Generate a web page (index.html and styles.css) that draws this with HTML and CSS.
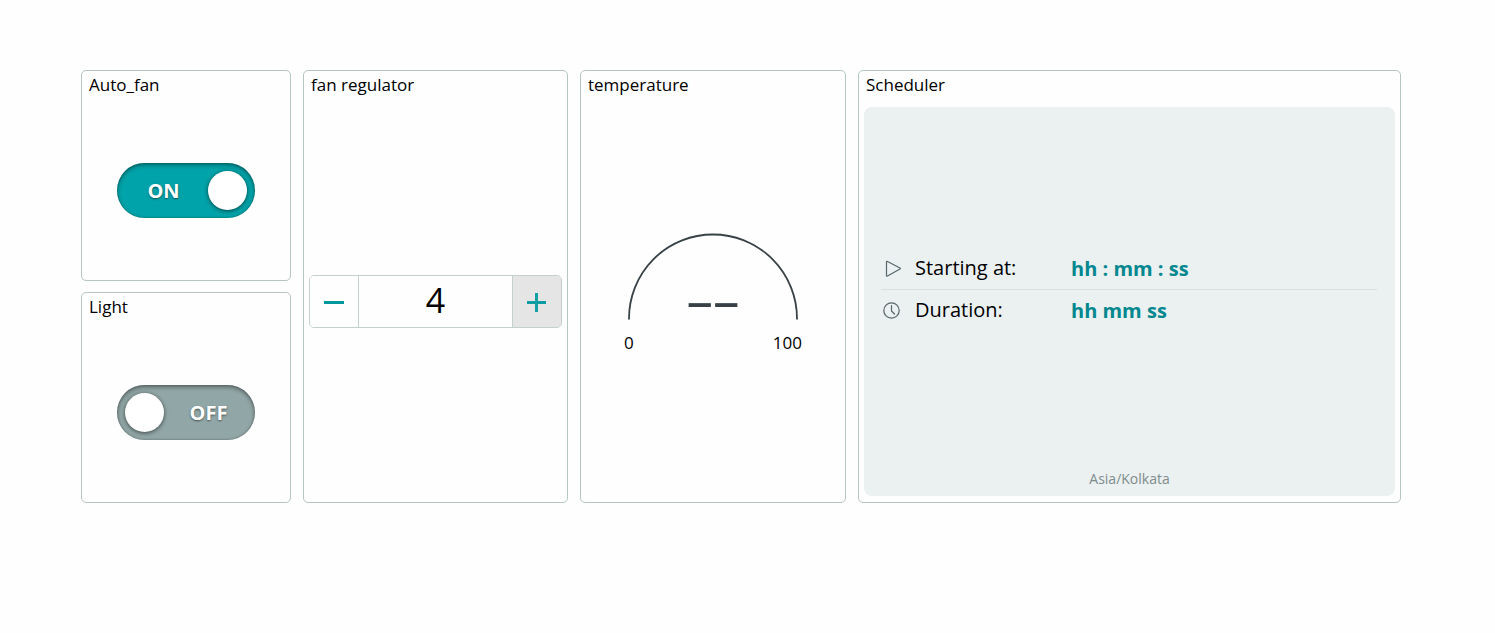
FILE: index.html
```html
<!DOCTYPE html>
<html lang="en">
<head>
<meta charset="utf-8">
<title>Dashboard</title>
<link rel="stylesheet" href="styles.css">
</head>
<body>
<main class="dashboard">
  <div class="stack">
    <section class="card">
      <h2 class="card-title" id="t-fan">Auto_fan</h2>
      <div class="card-body">
        <label class="toggle">
          <input class="toggle-input" type="checkbox" role="switch" aria-labelledby="t-fan" checked>
          <span class="toggle-text toggle-on">ON</span>
          <span class="toggle-knob"></span>
          <span class="toggle-text toggle-off">OFF</span>
        </label>
      </div>
    </section>
    <section class="card">
      <h2 class="card-title" id="t-light">Light</h2>
      <div class="card-body">
        <label class="toggle">
          <input class="toggle-input" type="checkbox" role="switch" aria-labelledby="t-light">
          <span class="toggle-text toggle-on">ON</span>
          <span class="toggle-knob"></span>
          <span class="toggle-text toggle-off">OFF</span>
        </label>
      </div>
    </section>
  </div>

  <section class="card">
    <h2 class="card-title" id="t-reg">fan regulator</h2>
    <div class="card-body">
      <div class="stepper">
        <button class="step" type="button" aria-label="Decrease">
          <svg width="20" height="20" viewBox="0 0 20 20"><path d="M0 10.500H20" stroke="#00979d" stroke-width="3"/></svg>
        </button>
        <input class="step-value" type="text" value="4" aria-labelledby="t-reg">
        <button class="step step-active" type="button" aria-label="Increase">
          <svg width="20" height="20" viewBox="0 0 20 20"><path d="M0 10.500H19M9.500 1V20" stroke="#12a0a5" stroke-width="3"/><path d="M0 10.500H19" stroke="#00979d"/></svg>
        </button>
      </div>
    </div>
  </section>

  <section class="card">
    <h2 class="card-title">temperature</h2>
    <div class="card-body">
      <div class="gauge">
        <svg class="gauge-dial" width="170" height="86" viewBox="0 0 170 86">
          <path d="M1 85.500V84.500A84 84 0 0 1 169 84.500V85.500" fill="none" stroke="#374146" stroke-width="1.800"/>
          <text class="gauge-value" x="85" y="85" text-anchor="middle">––</text>
        </svg>
        <div class="gauge-range"><span>0</span><span>100</span></div>
      </div>
    </div>
  </section>

  <section class="card">
    <h2 class="card-title">Scheduler</h2>
    <div class="card-body">
      <div class="scheduler">
        <div class="schedule-list">
          <div class="schedule-row">
            <svg class="schedule-icon" width="20" height="20" viewBox="0 0 20 20" fill="none" stroke="#57676b" stroke-width="1.200" stroke-linejoin="round"><path d="M5.500 3Q5.500 2 6.500 2.500L19 9Q19.800 9.500 19 10L6.500 17Q5.500 17.500 5.500 16.500Z"/></svg>
            <span class="schedule-name">Starting at:</span>
            <button class="schedule-value" type="button">hh : mm : ss</button>
          </div>
          <div class="schedule-row">
            <svg class="schedule-icon" width="20" height="20" viewBox="0 0 20 20" fill="none" stroke="#57676b" stroke-width="1.200" stroke-linecap="round" stroke-linejoin="round"><circle cx="10.500" cy="9.500" r="7.700"/><path d="M10.500 4.500V10L13.500 13"/></svg>
            <span class="schedule-name">Duration:</span>
            <button class="schedule-value" type="button">hh mm ss</button>
          </div>
        </div>
        <div class="timezone">Asia/Kolkata</div>
      </div>
    </div>
  </section>
</main>
</body>
</html>
```
FILE: styles.css
```css
* { box-sizing: border-box; }

body {
  margin: 0;
  background: #fefefe;
  color: #000;
  font-family: "Open Sans", "Noto Sans", sans-serif;
}

button, input { font: inherit; margin: 0; }

.dashboard {
  display: grid;
  grid-template-columns: 210fr 265fr 266fr 543fr;
  min-height: 573px;
  gap: 12px;
  padding: 70px 94px 70px 81px;
}

.stack {
  display: grid;
  grid-template-rows: 1fr 1fr;
  gap: 11px;
}

.card {
  display: flex;
  flex-direction: column;
  min-width: 0;
  border: 1px solid #b5c5c3;
  border-radius: 5px;
  background: #fefefe;
}

.card-title {
  margin: 0;
  padding: 2px 7px 4px;
  font-size: 17px;
  line-height: 24px;
  font-weight: 400;
}

.card-body {
  flex: 1;
  display: flex;
  align-items: center;
  justify-content: center;
  padding: 6px 5px;
}

/* Toggle */
.toggle {
  display: flex;
  align-items: center;
  width: 138px;
  height: 55px;
  padding: 0 8px;
  border-radius: 28px;
  background: #91a6a6;
  box-shadow: inset 0 2px 4px rgba(0, 0, 0, 0.4), inset 0 0 2px rgba(0, 0, 0, 0.3);
  cursor: pointer;
}

.toggle:has(:checked) { background: #00a3a9; }

.toggle-input {
  position: absolute;
  opacity: 0;
  pointer-events: none;
}

.toggle-text {
  flex: 1;
  color: #fff;
  font-size: 20px;
  line-height: 24px;
  font-weight: 700;
  text-align: center;
  text-shadow: 0 1px 2px rgba(0, 0, 0, 0.5);
}

.toggle-on { display: none; padding-right: 6px; }
.toggle-off { padding-left: 6px; }
.toggle-input:checked ~ .toggle-on { display: block; }
.toggle-input:checked ~ .toggle-off { display: none; }

.toggle-knob {
  width: 39px;
  height: 39px;
  border-radius: 50%;
  background: #fff;
  box-shadow: 0 1px 4px rgba(0, 0, 0, 0.6);
}

/* Stepper */
.stepper {
  display: flex;
  width: 100%;
  height: 53px;
  border: 1px solid #c3d0ce;
  border-radius: 5px;
  overflow: hidden;
}

.step {
  display: flex;
  align-items: center;
  justify-content: center;
  width: 48px;
  padding: 0;
  border: 0;
  background: #fefefe;
}

.step-active { background: #e5e5e5; }

.step-value {
  flex: 1;
  min-width: 0;
  padding: 0 0 4px;
  border: solid #c3d0ce;
  border-width: 0 1px;
  background: #fefefe;
  color: #000;
  font-size: 34px;
  line-height: 46px;
  text-align: center;
}

/* Gauge */
.gauge {
  display: flex;
  flex-direction: column;
  align-items: center;
  padding-bottom: 14px;
}

.gauge-dial {
  display: block;
  overflow: visible;
}

.gauge-value {
  fill: #374146;
  font-size: 53px;
}

.gauge-range {
  display: flex;
  justify-content: space-between;
  width: 178px;
  padding-top: 11px;
  font-size: 17px;
  line-height: 24px;
}

/* Scheduler */
.scheduler {
  align-self: stretch;
  flex: 1;
  display: flex;
  flex-direction: column;
  border-radius: 8px;
  background: #ebf0f0;
}

.schedule-list {
  flex: 1;
  display: flex;
  flex-direction: column;
  justify-content: center;
  padding: 4px 18px 0 17px;
}

.schedule-row {
  display: flex;
  align-items: center;
  height: 42px;
}

.schedule-row:first-child { border-bottom: 1px solid #d8dfde; }

.schedule-icon { flex: none; }

.schedule-name {
  width: 156px;
  margin-left: 14px;
  padding-bottom: 2px;
  font-size: 20px;
  line-height: 26px;
}

.schedule-value {
  padding: 0;
  border: 0;
  background: none;
  color: #00878f;
  font-size: 20px;
  line-height: 26px;
  font-weight: 700;
}

.timezone {
  padding-bottom: 7px;
  color: #7f8c8d;
  font-size: 14px;
  line-height: 20px;
  text-align: center;
}
```
